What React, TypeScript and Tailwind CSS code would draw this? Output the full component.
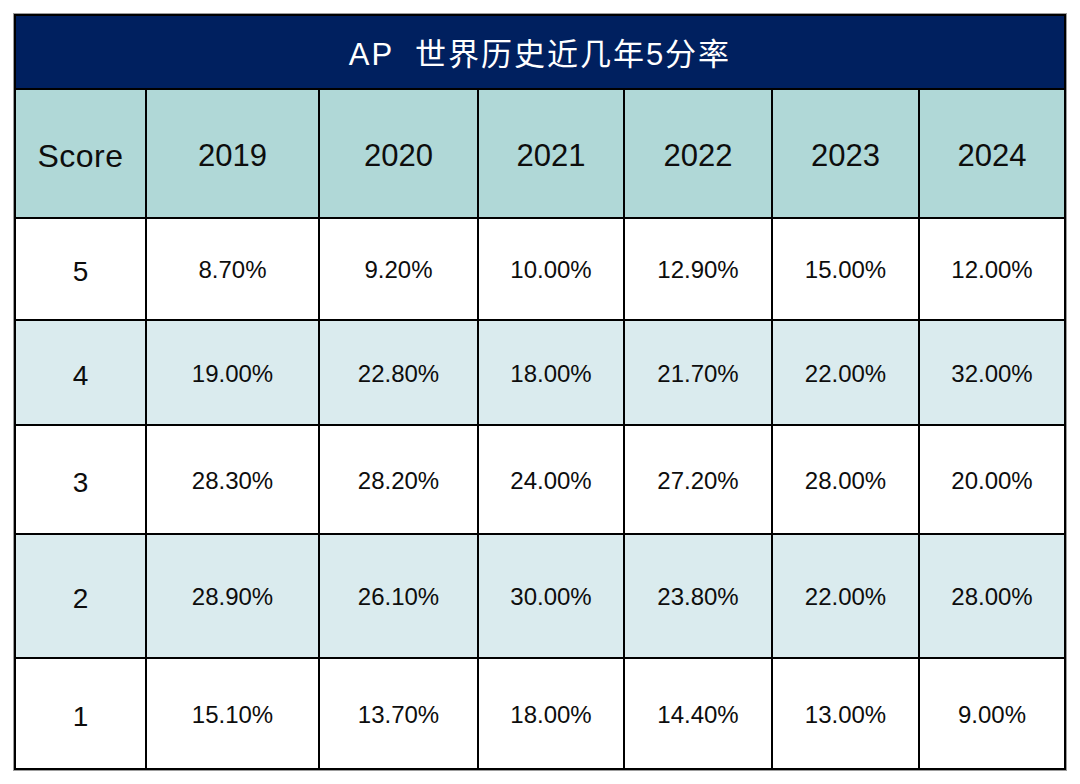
const years = ["2019", "2020", "2021", "2022", "2023", "2024"];

const rows = [
  { score: "5", h: "h-[100px]", bg: "bg-white", values: ["8.70%", "9.20%", "10.00%", "12.90%", "15.00%", "12.00%"] },
  { score: "4", h: "h-[103px]", bg: "bg-[#daebee]", values: ["19.00%", "22.80%", "18.00%", "21.70%", "22.00%", "32.00%"] },
  { score: "3", h: "h-[107px]", bg: "bg-white", values: ["28.30%", "28.20%", "24.00%", "27.20%", "28.00%", "20.00%"] },
  { score: "2", h: "h-[122px]", bg: "bg-[#daebee]", values: ["28.90%", "26.10%", "30.00%", "23.80%", "22.00%", "28.00%"] },
  { score: "1", h: "h-[109px]", bg: "bg-white", values: ["15.10%", "13.70%", "18.00%", "14.40%", "13.00%", "9.00%"] },
];

export default function App() {
  return (
    <div className="min-h-screen w-[1080px] bg-white pl-[14px] pt-[14px] font-['Liberation_Sans','Noto_Sans_CJK_SC',sans-serif] text-[#0d0d0d]">
      <div className="w-[1052px] border-2 border-black ring-1 ring-[#9c9c9c]">
        <div className="grid grid-cols-[129px_171px_157px_144px_146px_145px_144px] gap-[2px] bg-black">
          <div className="col-span-7 flex h-[72px] items-center justify-center whitespace-pre bg-[#00205f] pt-[6px] text-[31px] tracking-[2px] text-white">
            AP  世界历史近几年5分率
          </div>

          <div className="flex h-[127px] items-center justify-center bg-[#b0d8d7] pt-[5px] text-[32px] tracking-[0.5px]">
            Score
          </div>
          {years.map((y) => (
            <div key={y} className="flex h-[127px] items-center justify-center bg-[#b0d8d7] pt-[5px] text-[31px]">
              {y}
            </div>
          ))}

          {rows.map((row) => (
            <div key={row.score} className="contents">
              <div className={`flex ${row.h} ${row.bg} items-center justify-center pt-[6px] text-[28px]`}>
                {row.score}
              </div>
              {row.values.map((v, i) => (
                <div key={i} className={`flex ${row.h} ${row.bg} items-center justify-center pt-[2px] text-[24px]`}>
                  {v}
                </div>
              ))}
            </div>
          ))}
        </div>
      </div>
    </div>
  );
}
